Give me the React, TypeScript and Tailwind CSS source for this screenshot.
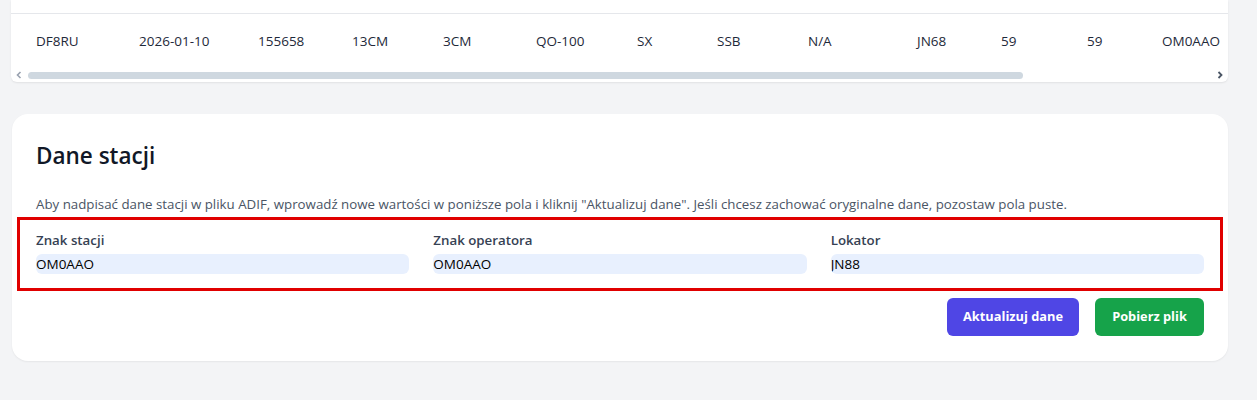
import { useState } from 'react';

const row = [
  { v: 'DF8RU', w: 'w-[103px]' },
  { v: '2026-01-10', w: 'w-[119px]' },
  { v: '155658', w: 'w-[94px]' },
  { v: '13CM', w: 'w-[91px]' },
  { v: '3CM', w: 'w-[93px]' },
  { v: 'QO-100', w: 'w-[101px]' },
  { v: 'SX', w: 'w-[80px]' },
  { v: 'SSB', w: 'w-[91px]' },
  { v: 'N/A', w: 'w-[109px]' },
  { v: 'JN68', w: 'w-[84px]' },
  { v: '59', w: 'w-[86px]' },
  { v: '59', w: 'w-[75px]' },
  { v: 'OM0AAO', w: 'w-[90px]' },
];

export default function App() {
  const [station, setStation] = useState('OM0AAO');
  const [operator, setOperator] = useState('OM0AAO');
  const [locator, setLocator] = useState('JN88');

  return (
    <div className="min-h-[400px] bg-[#f3f4f6] font-['Open_Sans','Noto_Sans',sans-serif] text-gray-900">
      {/* QSO table (scrolled) */}
      <div className="ml-[11px] w-[1217px] bg-white rounded-b-md shadow-[0_1px_2px_rgba(0,0,0,0.08)]">
        <div className="h-[14px] border-b border-gray-200" />
        <div className="overflow-hidden">
          <div className="flex h-[54px] items-center pl-[25px] text-[13.5px] text-gray-800 whitespace-nowrap">
            {row.map((c, i) => (
              <div key={i} className={`${c.w} shrink-0`}>{c.v}</div>
            ))}
          </div>
        </div>
        {/* fake scrollbar */}
        <div className="flex h-[14px] items-center">
          <div className="flex w-[16px] justify-center">
            <svg width="6" height="8" viewBox="0 0 6 8" className="text-gray-400">
              <path d="M4.5 1 L1.5 4 L4.5 7" fill="none" stroke="currentColor" strokeWidth="1.6" />
            </svg>
          </div>
          <div className="ml-[1px] h-[7px] w-[995px] rounded-full bg-[#cfd8e0]" />
          <div className="flex-1" />
          <div className="flex w-[16px] justify-center">
            <svg width="6" height="8" viewBox="0 0 6 8" className="text-gray-600">
              <path d="M1.5 1 L4.5 4 L1.5 7" fill="none" stroke="currentColor" strokeWidth="1.8" />
            </svg>
          </div>
        </div>
      </div>

      {/* Station data card */}
      <div className="ml-[12px] mt-[32px] w-[1216px] rounded-2xl bg-white px-6 pt-[26px] pb-6 shadow-[0_1px_2px_rgba(0,0,0,0.06)]">
        <h2 className="text-[22.5px] leading-8 font-semibold text-[#111827]">Dane stacji</h2>
        <p className="mt-[22px] text-[13.3px] leading-5 text-gray-600">
          Aby nadpisać dane stacji w pliku ADIF, wprowadź nowe wartości w poniższe pola i kliknij "Aktualizuj dane". Jeśli chcesz zachować oryginalne dane, pozostaw pola puste.
        </p>

        <div className="mt-[3px] -mx-[19px] border-[3px] border-[#e00000] px-[16px] pt-[10px] pb-[14px]">
          <div className="grid grid-cols-3 gap-6">
            <Field label="Znak stacji" value={station} onChange={setStation} />
            <Field label="Znak operatora" value={operator} onChange={setOperator} />
            <Field label="Lokator" value={locator} onChange={setLocator} />
          </div>
        </div>

        <div className="mt-[7px] flex justify-end gap-4 pb-px">
          <button className="h-[38px] w-[132px] rounded-md bg-[#4f46e5] text-[12.8px] font-bold text-white">
            Aktualizuj dane
          </button>
          <button className="h-[38px] w-[109px] rounded-md bg-[#16a34a] text-[12.8px] font-bold text-white">
            Pobierz plik
          </button>
        </div>
      </div>
    </div>
  );
}

function Field({ label, value, onChange }: { label: string; value: string; onChange: (v: string) => void }) {
  return (
    <div className="flex flex-col">
      <label className="text-[13.3px] leading-5 font-semibold text-gray-700">{label}</label>
      <input
        value={value}
        onChange={(e) => onChange(e.target.value)}
        className="mt-1 h-5 w-full rounded-md bg-[#e8f0fe] px-0 text-[13.5px] text-black outline-none"
      />
    </div>
  );
}
